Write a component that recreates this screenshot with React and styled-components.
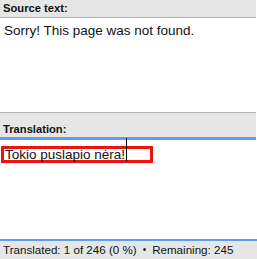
import React from 'react';
import styled, { createGlobalStyle } from 'styled-components';

const GlobalStyle = createGlobalStyle`
  html, body {
    margin: 0;
    padding: 0;
    background: #ffffff;
  }
  body {
    font-family: "Liberation Sans", Arial, sans-serif;
    color: #111;
  }
`;

const Window = styled.div`
  width: 257px;
  height: 259px;
  display: flex;
  flex-direction: column;
  overflow: hidden;
  background: #fff;
`;

const PaneHeader = styled.div`
  box-sizing: border-box;
  margin-right: 1px;
  height: ${props => props.height}px;
  background: #e6e6e6;
  border-top: ${props => props.topBorder ? '1px solid #b3b3b3' : 'none'};
  border-bottom: ${props => props.active ? '3px solid #5d9ff0' : '1px solid #b3b3b3'};
  display: flex;
  align-items: flex-end;
  padding: 0 0 ${props => props.active ? 1 : 2}px 3px;
  font-size: 11.2px;
  font-weight: 700;
  line-height: 14px;
  color: #111;
`;

const PaneBody = styled.div`
  flex: ${props => props.grow ? 1 : 'none'};
  height: ${props => props.height ? `${props.height}px` : 'auto'};
  padding: ${props => props.pad};
  font-size: 13.5px;
  line-height: 16px;
  box-sizing: border-box;
`;

const EditBox = styled.div`
  position: relative;
  box-sizing: border-box;
  width: 152px;
  height: 17px;
  margin-left: 1px;
  border: 3px solid #ee1111;
  display: flex;
  align-items: center;
  padding-left: 1px;
  font-size: 13.5px;
  line-height: 13px;
  white-space: nowrap;
`;

const Caret = styled.span`
  position: absolute;
  left: 122px;
  top: -11px;
  width: 1px;
  height: 23px;
  background: #000;
`;

const StatusBar = styled.div`
  box-sizing: border-box;
  height: 20px;
  background: #e6e6e6;
  border-top: 2px solid #5d9ff0;
  display: flex;
  align-items: center;
  padding: 0 0 0 3px;
  font-size: 11.6px;
  line-height: 16px;
  white-space: nowrap;
  color: #111;
`;

const Dot = styled.span`
  margin: 0 6px;
  font-size: 10px;
`;

export default function App() {
  return (
    <>
      <GlobalStyle />
      <Window>
        <PaneHeader height={18}>Source text:</PaneHeader>
        <PaneBody height={94} pad="5px 0 0 4px">Sorry! This page was not found.</PaneBody>
        <PaneHeader height={28} topBorder active>Translation:</PaneHeader>
        <PaneBody grow pad="6px 0 0 0">
          <EditBox>
            Tokio puslapio nėra!
            <Caret />
          </EditBox>
        </PaneBody>
        <StatusBar>
          Translated: 1 of 246 (0 %)<Dot>•</Dot>Remaining: 245
        </StatusBar>
      </Window>
    </>
  );
}
